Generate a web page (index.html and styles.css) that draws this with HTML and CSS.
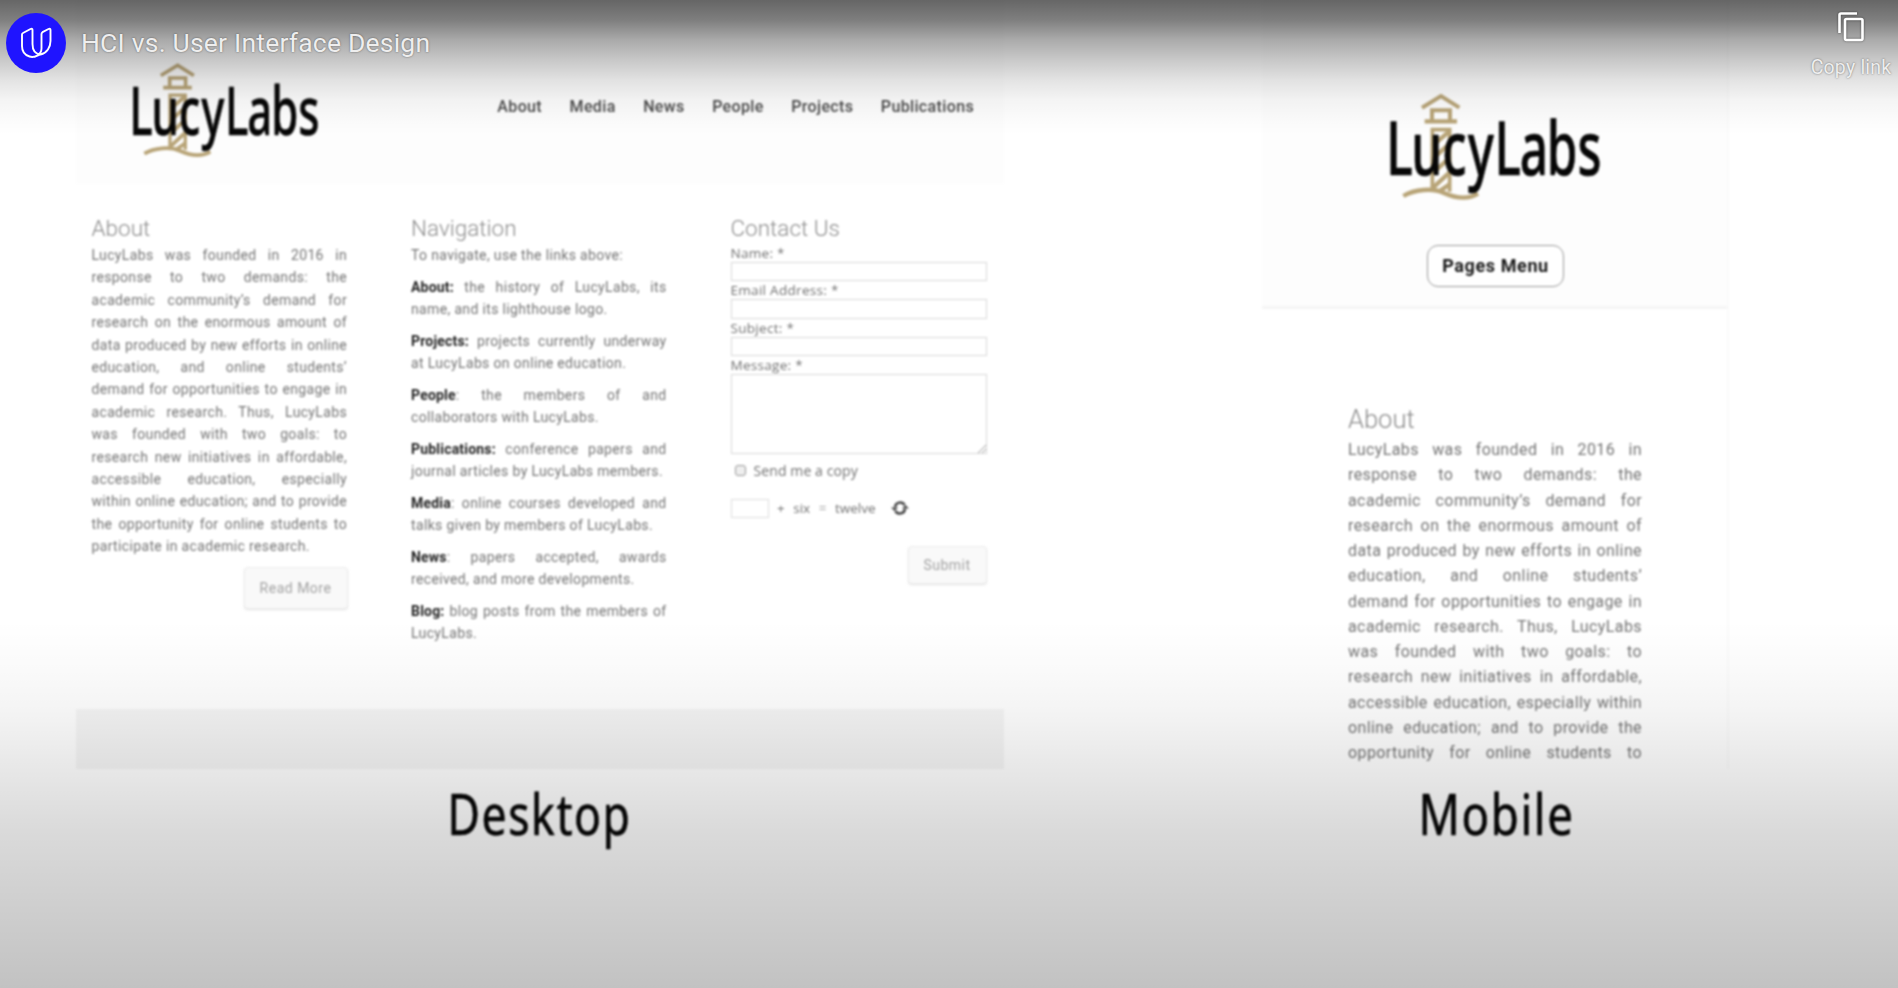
FILE: index.html
```html
<!DOCTYPE html>
<html lang="en">
<head>
<meta charset="utf-8">
<title>HCI vs. User Interface Design</title>
<link rel="stylesheet" href="styles.css">
</head>
<body>
<svg class="defs" aria-hidden="true">
  <symbol id="lighthouse" viewBox="380 150 660 350">
    <g fill="none" stroke="#b8a477" stroke-width="12">
      <path d="M488 203L545 168L600 203"/>
      <path d="M518 240V211H572V240"/>
      <path d="M496 244H593" stroke-width="13"/>
      <path d="M519 265V453M571 265V455M514 269H576" stroke-width="11"/>
      <path d="M518 318L570 274M518 358L572 310M518 402L572 352M518 446L572 396M540 454L572 432" stroke-width="13"/>
      <path d="M432 468C465 448 520 443 552 458C590 475 625 480 656 461" stroke-width="13"/>
    </g>
  </symbol>
</svg>
<div class="player">
  <main class="video">
    <section class="desktop">
      <header class="site-header">
        <svg class="logo" viewBox="380 150 660 350"><use href="#lighthouse" x="380" y="150" width="660" height="350"/><text class="logo-text" transform="scale(.66 1)" x="577 691 831 947 1069 1184 1307 1446" y="405">LucyLabs</text></svg>
        <nav class="nav"><a>About</a><a>Media</a><a>News</a><a>People</a><a>Projects</a><a>Publications</a></nav>
      </header>
      <div class="columns">
        <article class="about">
          <h2>About</h2>
          <p class="copy">
            <span>LucyLabs was founded in 2016 in</span>
            <span>response to two demands: the</span>
            <span>academic community’s demand for</span>
            <span>research on the enormous amount of</span>
            <span>data produced by new efforts in online</span>
            <span>education, and online students’</span>
            <span>demand for opportunities to engage in</span>
            <span>academic research. Thus, LucyLabs</span>
            <span>was founded with two goals: to</span>
            <span>research new initiatives in affordable,</span>
            <span>accessible education, especially</span>
            <span>within online education; and to provide</span>
            <span>the opportunity for online students to</span>
            <span class="end">participate in academic research.</span>
          </p>
          <a class="button read-more">Read More</a>
        </article>
        <article class="navigation">
          <h2>Navigation</h2>
          <p class="copy"><span class="end">To navigate, use the links above:</span></p>
          <p class="copy"><span><b>About:</b> the history of LucyLabs, its</span><span class="end">name, and its lighthouse logo.</span></p>
          <p class="copy"><span><b>Projects:</b> projects currently underway</span><span class="end">at LucyLabs on online education.</span></p>
          <p class="copy"><span><b>People</b>: the members of and</span><span class="end">collaborators with LucyLabs.</span></p>
          <p class="copy"><span><b>Publications:</b> conference papers and</span><span class="end">journal articles by LucyLabs members.</span></p>
          <p class="copy"><span><b>Media</b>: online courses developed and</span><span class="end">talks given by members of LucyLabs.</span></p>
          <p class="copy"><span><b>News</b>: papers accepted, awards</span><span class="end">received, and more developments.</span></p>
          <p class="copy"><span><b>Blog:</b> blog posts from the members of</span><span class="end">LucyLabs.</span></p>
        </article>
        <article class="contact">
          <h2>Contact Us</h2>
          <label>Name: *</label><div class="field"></div>
          <label>Email Address: *</label><div class="field"></div>
          <label>Subject: *</label><div class="field"></div>
          <label>Message: *</label>
          <div class="field message"><svg width="8" height="8" viewBox="0 0 8 8"><path d="M0 8L8 0M4 8L8 4"/></svg></div>
          <div class="check"><i></i>Send me a copy</div>
          <div class="captcha"><i></i><span>+</span><span>six</span><span class="faint">=</span><span>twelve</span>
            <svg width="18" height="16" viewBox="0 0 18 16"><path class="ring" d="M4 7A5.2 5.2 0 0 1 13.6 5M14 9A5.2 5.2 0 0 1 4.4 11"/><path class="tip" d="M0 7.5H7L3.5 11ZM11 8.5H18L14.500 5Z"/></svg>
          </div>
          <a class="button submit">Submit</a>
        </article>
      </div>
      <footer class="site-footer"></footer>
      <svg class="caption" viewBox="0 0 928 90"><text x="371.500" y="66" textLength="184" lengthAdjust="spacingAndGlyphs">Desktop</text></svg>
    </section>
    <section class="mobile">
      <div class="phone">
        <header class="phone-header">
          <svg class="logo" viewBox="380 150 660 350"><use href="#lighthouse" x="380" y="150" width="660" height="350"/><text class="logo-text" transform="scale(.66 1)" x="577 691 831 947 1069 1184 1307 1446" y="405">LucyLabs</text></svg>
          <a class="menu">Pages Menu</a>
        </header>
        <article class="phone-about">
          <h2>About</h2>
          <p class="copy">
            <span>LucyLabs was founded in 2016 in</span>
            <span>response to two demands: the</span>
            <span>academic community’s demand for</span>
            <span>research on the enormous amount of</span>
            <span>data produced by new efforts in online</span>
            <span>education, and online students’</span>
            <span>demand for opportunities to engage in</span>
            <span>academic research. Thus, LucyLabs</span>
            <span>was founded with two goals: to</span>
            <span>research new initiatives in affordable,</span>
            <span>accessible education, especially within</span>
            <span>online education; and to provide the</span>
            <span>opportunity for online students to</span>
          </p>
        </article>
      </div>
      <svg class="caption" viewBox="0 0 467 90"><text x="156.500" y="66" textLength="156" lengthAdjust="spacingAndGlyphs">Mobile</text></svg>
    </section>
  </main>
  <div class="shade"></div>
  <div class="topbar">
    <svg class="avatar" width="60" height="60" viewBox="0 0 60 60"><circle cx="30" cy="30" r="30" fill="#1f14ff"/><path d="M16 21.500Q16 20.500 17 20L24.500 16Q26.500 15 26.500 17V31C26.500 37 29.500 41 34.500 41.500C41 40 44.500 34 44.500 28V17Q44.500 15 42.500 16L36.500 19.200Q35.500 20 35.500 21V35.500C35.500 42 28 45 23.500 43.500C18.500 42 16 38 16 33ZM28.500 44L35.500 41" fill="none" stroke="#fff" stroke-width="1.900" stroke-linejoin="round"/></svg>
    <h1 class="title">HCI vs. User Interface Design</h1>
    <div class="copy-link">
      <svg width="28" height="32" viewBox="0 0 28 32"><path d="M2.500 22V4Q2.500 2.500 4 2.500H20"/><rect x="8" y="8" width="17.500" height="21" rx="1.500"/></svg>
      <span>Copy link</span>
    </div>
  </div>
</div>
</body>
</html>
```
FILE: styles.css
```css
* { box-sizing: border-box; }
body { margin: 0; background: #fff; font-family: Roboto, "Liberation Sans", sans-serif; }
h1, h2, p { margin: 0; }
.defs { position: absolute; width: 0; height: 0; }
.player { position: relative; width: 1898px; height: 988px; overflow: hidden; }
.video { display: flex; height: 988px; padding-left: 76px; gap: 258px; filter: blur(0.9px); }

.desktop { width: 928px; display: flex; flex-direction: column; }
.site-header { height: 184px; flex: none; display: flex; align-items: flex-start; padding: 59.500px 30px 0 53px; background: #fdfdfd; }
.logo { display: block; overflow: visible; }
.site-header .logo { width: 194.500px; height: 103.100px; }
.logo-text { font-family: "Noto Sans", sans-serif; font-size: 225px; font-weight: 500; fill: #060606; stroke: #060606; stroke-width: 2; stroke-linejoin: round; }
.nav { display: flex; gap: 27.500px; margin: 36.500px 0 0 auto; font-size: 16px; line-height: 22px; letter-spacing: 0.360px; color: #484848; font-weight: 500; }

.columns { height: 525px; flex: none; display: grid; grid-template-columns: repeat(3, 256px); column-gap: 63.500px; padding: 30px 0 0 15.500px; }
h2 { font-size: 22.500px; line-height: 29px; height: 30px; font-weight: 300; color: #8c8c8c; }
.copy { font-size: 14px; line-height: 22.400px; letter-spacing: 0.350px; color: #747474; white-space: nowrap; }
.copy span { display: block; width: 255.500px; text-align: justify; text-align-last: justify; }
.copy .end { text-align: left; text-align-last: left; }
.copy b { color: #222; letter-spacing: 0.200px; }
.about { display: flex; flex-direction: column; }
.navigation .copy + .copy { margin-top: 9.200px; }
.button { display: flex; align-items: center; justify-content: center; align-self: flex-end; border: 1px solid #ececec; border-radius: 4px; background: #f9f9f9; box-shadow: 0 1px 2px #e2e2e2; color: #a2a2a2; font-size: 14px; letter-spacing: 0.500px; }
.read-more { width: 104px; height: 42px; margin-top: 9.500px; }

.contact { display: flex; flex-direction: column; }
.contact label { height: 18px; line-height: 19px; font-family: "Open Sans", sans-serif; font-size: 13.500px; letter-spacing: 0.300px; color: #707070; white-space: nowrap; }
.field { height: 19.400px; border: 1.500px solid #d8d8d8; }
.message { height: 80px; display: flex; align-items: flex-end; justify-content: flex-end; }
.message svg { fill: none; stroke: #999; }
.check { display: flex; align-items: center; gap: 8px; height: 20px; margin: 6.500px 0 0 4px; font-family: "Open Sans", sans-serif; font-size: 14px; letter-spacing: 0.100px; color: #707070; }
.check i { width: 11px; height: 11px; border: 1px solid #999; border-radius: 3px; background: #eee; }
.captcha { display: flex; align-items: center; height: 20px; margin-top: 17.500px; font-family: "Open Sans", sans-serif; font-size: 13.500px; color: #707070; gap: 8.500px; }
.captcha i { width: 38px; height: 19px; border: 1.500px solid #ddd; }
.captcha .faint { opacity: 0.600; }
.captcha svg { margin-left: 7px; }
.ring { fill: none; stroke: #444; stroke-width: 2.500; }
.tip { fill: #444; }
.submit { width: 79px; height: 38px; margin-top: 28px; }
.site-footer { height: 60px; flex: none; background: #f5f5f5; }
.caption { display: block; flex: none; height: 90px; width: 100%; overflow: visible; }
.caption text { font-family: "Noto Sans", sans-serif; font-size: 57px; letter-spacing: 2px; fill: #060606; stroke: #060606; stroke-width: 0.700; stroke-linejoin: round; }

.mobile { width: 467px; }
.phone { height: 769px; border-right: 2px solid #fafafa; }
.phone-header { height: 309px; display: flex; flex-direction: column; align-items: center; padding: 90px 0 0 2px; background: #fdfdfd; border-bottom: 3px solid #f5f5f5; }
.phone-header .logo { width: 220px; height: 116.700px; }
.menu { display: flex; align-items: center; justify-content: center; width: 137px; height: 42px; margin-top: 38px; border: 1.500px solid #999; border-radius: 11px; background: #fff; color: #181818; font-size: 18px; font-weight: 700; letter-spacing: 0.600px; white-space: nowrap; }
.phone-about { width: 294px; margin: 94px 0 0 86px; }
.phone-about h2 { font-size: 25.500px; line-height: 32px; height: 32px; }
.phone-about .copy { font-size: 16px; line-height: 25.270px; letter-spacing: 0.400px; padding-top: 2px; }
.phone-about .copy span { width: 294px; }

.shade { position: absolute; inset: 0; background:
  linear-gradient(rgba(0,0,0,.6) 0, rgba(0,0,0,.5) 20px, rgba(0,0,0,.33) 40px, rgba(0,0,0,.21) 60px, rgba(0,0,0,.11) 80px, rgba(0,0,0,.045) 100px, rgba(0,0,0,.01) 122px, transparent 135px),
  linear-gradient(transparent 620px, rgba(0,0,0,.02) 670px, rgba(0,0,0,.045) 710px, rgba(0,0,0,.095) 770px, rgba(0,0,0,.145) 830px, rgba(0,0,0,.24) 988px); }
.topbar { position: absolute; top: 0; left: 0; right: 0; height: 90px; display: flex; padding: 0 5px 0 6px; }
.avatar { margin-top: 13px; }
.title { margin: 27px 0 0 15px; font-size: 26.500px; line-height: 32px; font-weight: 400; letter-spacing: 0.200px; color: #eee; text-shadow: 0 0 2px rgba(0,0,0,.5); white-space: nowrap; }
.copy-link { margin: 11px 0 0 auto; width: 84px; display: flex; flex-direction: column; align-items: center; color: #eee; font-size: 19.500px; line-height: 24px; letter-spacing: 0.200px; white-space: nowrap; text-shadow: 0 0 2px rgba(0,0,0,.5); }
.copy-link svg { fill: none; stroke: #fff; stroke-width: 2.600; filter: drop-shadow(0 0 1px rgba(0,0,0,.5)); }
.copy-link span { margin-top: 13px; }
```
